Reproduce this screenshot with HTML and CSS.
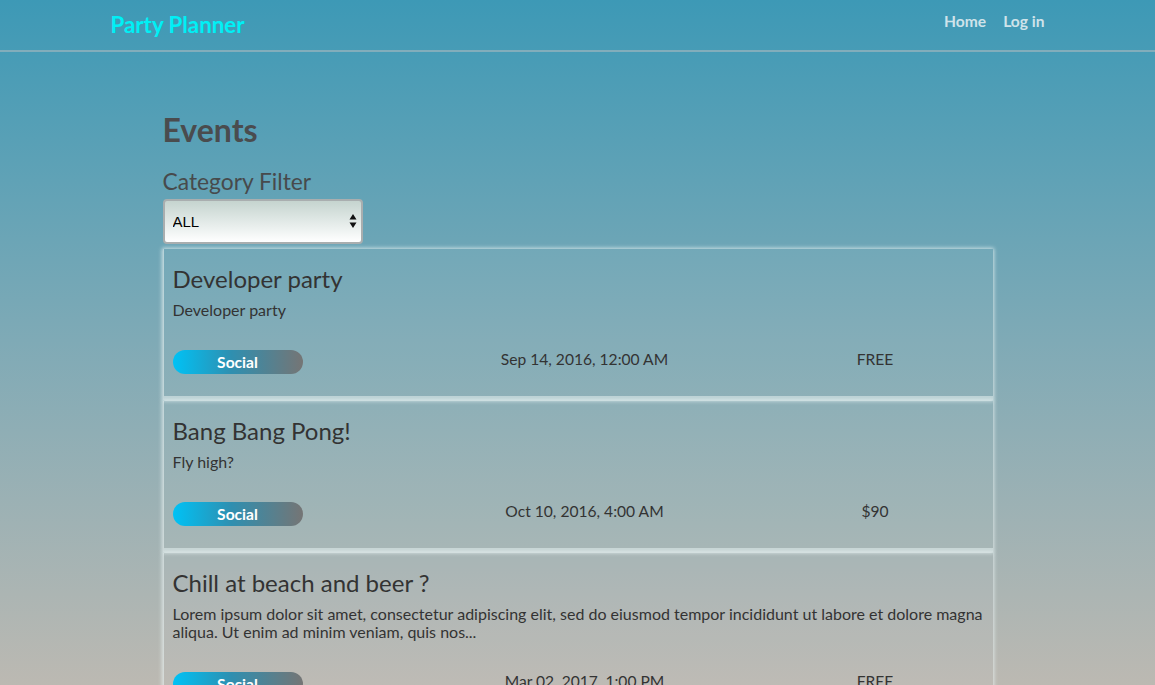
FILE: index.html
```html
<!DOCTYPE html>
<html>
<head>
<meta charset="utf-8">
<title>Party Planner</title>
<link rel="stylesheet" href="styles.css">
</head>
<body>
<header class="navbar">
  <div class="nav-inner">
    <a class="brand" href="#">Party Planner</a>
    <nav class="nav-links">
      <a href="#">Home</a>
      <a href="#">Log in</a>
    </nav>
  </div>
</header>
<main class="content">
  <h1 class="page-title">Events</h1>
  <h2 class="filter-title">Category Filter</h2>
  <div class="select-wrap">
    <select class="filter-select">
      <option>ALL</option>
    </select>
    <svg class="select-arrows" width="8" height="16" viewBox="0 0 8 16"><path d="M4 1 L7.5 6.5 H0.5 Z M4 15 L7.5 9.5 H0.5 Z" fill="#111"/></svg>
  </div>
  <section class="events">
    <article class="card">
      <h3 class="card-title">Developer party</h3>
      <p class="card-desc">Developer party</p>
      <div class="card-meta">
        <div class="meta-cat"><span class="badge">Social</span></div>
        <div class="meta-date">Sep 14, 2016, 12:00 AM</div>
        <div class="meta-price">FREE</div>
      </div>
    </article>
    <article class="card">
      <h3 class="card-title">Bang Bang Pong!</h3>
      <p class="card-desc">Fly high?</p>
      <div class="card-meta">
        <div class="meta-cat"><span class="badge">Social</span></div>
        <div class="meta-date">Oct 10, 2016, 4:00 AM</div>
        <div class="meta-price">$90</div>
      </div>
    </article>
    <article class="card">
      <h3 class="card-title">Chill at beach and beer ?</h3>
      <p class="card-desc">Lorem ipsum dolor sit amet, consectetur adipiscing elit, sed do eiusmod tempor incididunt ut labore et dolore magna aliqua. Ut enim ad minim veniam, quis nos...</p>
      <div class="card-meta">
        <div class="meta-cat"><span class="badge">Social</span></div>
        <div class="meta-date">Mar 02, 2017, 1:00 PM</div>
        <div class="meta-price">FREE</div>
      </div>
    </article>
  </section>
</main>
</body>
</html>
```

FILE: styles.css
```css
* { box-sizing: border-box; }
html { height: 100%; }
body {
  margin: 0;
  min-height: 100%;
  font-family: Lato, "Open Sans", sans-serif;
  color: #333;
  background: linear-gradient(to bottom, #3d99b6 0px, #7faab6 340px, #bcb9b2 685px) no-repeat;
  background-color: #bcb9b2;
}
.navbar {
  height: 52px;
  border-bottom: 2px solid rgba(170, 185, 190, 0.6);
}
.nav-inner {
  width: 970px;
  margin: 0 auto;
  height: 50px;
  display: flex;
  justify-content: space-between;
  align-items: flex-start;
}
.brand {
  color: #00f0f5;
  text-decoration: none;
  font-size: 22.3px;
  font-weight: 700;
  line-height: 20px;
  padding: 15px 15px 15px 18px;
}
.nav-links { display: flex; }
.nav-links a {
  color: #cfe3ea;
  text-decoration: none;
  font-size: 15.6px;
  font-weight: 700;
  line-height: 20px;
  padding: 11px 0 11px 17px;
}
.nav-links a:last-child { padding-right: 18px; }
.content {
  width: 830px;
  margin: 0 auto;
  padding-top: 58px;
}
.page-title {
  margin: 0;
  font-size: 32px;
  font-weight: 700;
  color: #4a4c4e;
  line-height: 40px;
}
.filter-title {
  margin: 18px 0 0;
  font-size: 22.8px;
  font-weight: 400;
  color: #474a4c;
  line-height: 26px;
}
.select-wrap {
  position: relative;
  width: 200px;
  height: 45px;
  margin-top: 5px;
}
.filter-select {
  -webkit-appearance: none;
  appearance: none;
  width: 200px;
  height: 45px;
  border: 2px solid #a9aeaf;
  border-radius: 4px;
  background: linear-gradient(to bottom, #c5d4cf, #ffffff);
  font-family: "Liberation Sans", Arial, sans-serif;
  font-size: 15px;
  color: #000;
  padding: 0 8px;
}
.select-arrows {
  position: absolute;
  right: 6px;
  top: 14px;
}
.events {
  margin-top: 5px;
  display: flex;
  flex-direction: column;
  gap: 1px;
}
.card {
  background: rgba(255, 255, 255, 0.04);
  box-shadow: 0 0 4px 1px rgba(235, 245, 245, 0.75);
  border-left: 1px solid rgba(230, 240, 240, 0.6);
  border-bottom: 4px solid rgba(225, 238, 238, 0.55);
  padding: 16px 9px 22px;
}
.card-title {
  margin: 0;
  font-size: 24px;
  font-weight: 400;
  line-height: 28px;
  color: #333;
}
.card-desc {
  margin: 8px 0 0;
  font-size: 16px;
  line-height: 18px;
  color: #333;
}
.card-meta {
  margin-top: 30px;
  display: grid;
  grid-template-columns: 280px 264px 1fr;
  align-items: start;
  font-size: 15.6px;
  line-height: 20px;
  color: #333;
}
.meta-date { text-align: center; }
.meta-price { text-align: center; padding-left: 50px; }
.badge {
  display: block;
  width: 130px;
  height: 24px;
  margin-top: 1px;
  border-radius: 12px;
  background: linear-gradient(to right, #00c2f5 0%, #2f8fb0 45%, #757575 100%);
  color: #fff;
  font-weight: 700;
  font-size: 15.6px;
  line-height: 24px;
  text-align: center;
}
```
